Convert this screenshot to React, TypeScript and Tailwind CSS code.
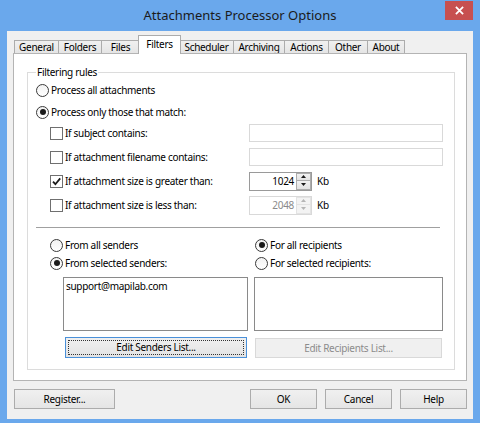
import React from 'react';

type RadioProps = { checked?: boolean; label: string };

const Radio: React.FC<RadioProps> = ({ checked, label }) => (
  <div className="flex items-center gap-[2px]">
    <span className="flex h-[13px] w-[13px] shrink-0 items-center justify-center rounded-full border border-[#3a3a3a] bg-gradient-to-b from-[#f2f2f2] to-white">
      {checked && <span className="h-[6px] w-[6px] rounded-full bg-[#1a1a1a]" />}
    </span>
    <span className="whitespace-nowrap">{label}</span>
  </div>
);

const Checkbox: React.FC<RadioProps> = ({ checked, label }) => (
  <div className="flex items-center gap-[2px]">
    <span className="flex h-[13px] w-[13px] shrink-0 items-center justify-center border border-[#6f6f6f] bg-white">
      {checked && (
        <svg viewBox="0 0 11 11" className="h-[11px] w-[11px]">
          <path d="M2 5.6 L4.4 8.2 L9.2 2.4" stroke="#1a1a1a" strokeWidth="1.8" fill="none" />
        </svg>
      )}
    </span>
    <span className="whitespace-nowrap">{label}</span>
  </div>
);

const Spinner: React.FC<{ value: string; disabled?: boolean }> = ({ value, disabled }) => (
  <div
    className={
      disabled
        ? 'flex h-[19px] w-[63px] border border-[#d9d9d9] bg-white text-[#8a8a8a]'
        : 'flex h-[19px] w-[63px] border border-[#9a9a9a] bg-white text-black'
    }
  >
    <span className="flex-1 pr-[2px] text-right leading-[17px]">{value}</span>
    <div className="flex w-[15px] flex-col">
      {/* up / down arrows */}
      <span
        className={
          disabled
            ? 'flex h-[8px] items-center justify-center border border-[#e3e3e3] bg-[#f3f3f3]'
            : 'flex h-[8px] items-center justify-center border border-[#acacac] bg-gradient-to-b from-[#f2f2f2] to-[#e2e2e2]'
        }
      >
        <svg viewBox="0 0 5 3" className="h-[3px] w-[5px]">
          <path d="M0 3 L2.5 0 L5 3 Z" fill={disabled ? '#b5b5b5' : '#1a1a1a'} />
        </svg>
      </span>
      <span
        className={
          disabled
            ? 'flex h-[9px] items-center justify-center border border-t-0 border-[#e3e3e3] bg-[#f3f3f3]'
            : 'flex h-[9px] items-center justify-center border border-t-0 border-[#acacac] bg-gradient-to-b from-[#f2f2f2] to-[#e2e2e2]'
        }
      >
        <svg viewBox="0 0 5 3" className="h-[3px] w-[5px]">
          <path d="M0 0 L2.5 3 L5 0 Z" fill={disabled ? '#b5b5b5' : '#1a1a1a'} />
        </svg>
      </span>
    </div>
  </div>
);

const Button: React.FC<{ children: React.ReactNode; className?: string }> = ({ children, className }) => (
  <div
    className={
      'flex h-[20px] items-center justify-center border border-[#acacac] bg-gradient-to-b from-[#f0f0f0] to-[#e5e5e5] ' +
      (className ?? '')
    }
  >
    {children}
  </div>
);

const tabs = [
  { label: 'General', w: 'w-[45px]' },
  { label: 'Folders', w: 'w-[44px]' },
  { label: 'Files', w: 'w-[39px]' },
  { label: 'Filters', w: 'w-[43px]', active: true },
  { label: 'Scheduler', w: 'w-[55px]' },
  { label: 'Archiving', w: 'w-[52px]' },
  { label: 'Actions', w: 'w-[45px]' },
  { label: 'Other', w: 'w-[40px]' },
  { label: 'About', w: 'w-[38px]' },
];

export default function App() {
  return (
    <div className="flex h-[423px] w-[480px] flex-col overflow-hidden bg-[#6aa8ec] font-['Noto_Sans',sans-serif] text-[10px] tracking-[-0.3px] text-black">
      {/* Title bar */}
      <div className="grid h-[31px] shrink-0 grid-cols-[1fr_auto_1fr]">
        <div />
        <div className="self-center text-[13px] leading-none tracking-normal text-[#1b1b1b]">
          Attachments Processor Options
        </div>
        <div className="flex justify-end pr-[7px] pt-[1px]">
          <div className="flex h-[19px] w-[28px] items-center justify-center bg-[#c75050]">
            <svg viewBox="0 0 10 10" className="h-[9px] w-[9px]">
              <path d="M1 1 L9 9 M9 1 L1 9" stroke="white" strokeWidth="2" />
            </svg>
          </div>
        </div>
      </div>

      {/* Client area */}
      <div className="mx-[7px] mb-[4px] flex flex-1 flex-col bg-[#f0f0f0] px-[6px] pt-[4px]">
        {/* Tabs */}
        <div className="flex h-[18px] items-end pl-[2px]">
          {tabs.map((t) =>
            t.active ? (
              <div
                key={t.label}
                className={`relative z-10 -mb-px -ml-[2px] -mr-[1px] flex h-[19px] items-start justify-center border border-b-0 border-[#acacac] bg-white pt-[3px] leading-none ${t.w}`}
              >
                {t.label}
              </div>
            ) : (
              <div
                key={t.label}
                className={`-ml-px flex h-[13px] items-center justify-center border border-b-0 border-[#acacac] bg-gradient-to-b from-[#f0f0f0] to-[#e5e5e5] leading-none ${t.w}`}
              >
                {t.label}
              </div>
            ),
          )}
        </div>

        {/* Tab page */}
        <div className="flex h-[328px] flex-col border border-[#b4b4b4] bg-white pl-[13px] pr-[11px] pt-[12px]">
          <fieldset className="h-[304px] border border-[#dcdcdc] pl-[8px] pr-[11px]">
            <legend className="px-[1px] leading-[12px]">Filtering rules</legend>

            <div className="mt-[2px] flex h-[20px] items-center">
              <Radio label="Process all attachments" />
            </div>
            <div className="mt-[3px] flex h-[18px] items-center">
              <Radio checked label="Process only those that match:" />
            </div>

            {/* Conditions */}
            <div className="flex h-[24px] items-center pl-[14px]">
              <div className="w-[199px] shrink-0">
                <Checkbox label="If subject contains:" />
              </div>
              <div className="h-[18px] flex-1 border border-[#d9d9d9] bg-white" />
            </div>
            <div className="flex h-[24px] items-center pl-[14px]">
              <div className="w-[199px] shrink-0">
                <Checkbox label="If attachment filename contains:" />
              </div>
              <div className="h-[18px] flex-1 border border-[#d9d9d9] bg-white" />
            </div>
            <div className="flex h-[24px] items-center pl-[14px]">
              <div className="w-[199px] shrink-0">
                <Checkbox checked label="If attachment size is greater than:" />
              </div>
              <Spinner value="1024" />
              <span className="ml-[5px]">Kb</span>
            </div>
            <div className="flex h-[24px] items-center pl-[14px]">
              <div className="w-[199px] shrink-0">
                <Checkbox label="If attachment size is less than:" />
              </div>
              <Spinner value="2048" disabled />
              <span className="ml-[5px]">Kb</span>
            </div>

            <div className="mr-[3px] mt-[10px] border-t border-[#a0a0a0]" />

            {/* Senders / recipients */}
            <div className="mt-[8px] flex">
              <div className="flex w-[218px] shrink-0 flex-col">
                <div className="flex h-[18px] items-center pl-[14px]">
                  <Radio label="From all senders" />
                </div>
                <div className="flex h-[18px] items-center pl-[14px]">
                  <Radio checked label="From selected senders:" />
                </div>
                <div className="ml-[27px] mt-[5px] h-[54px] w-[185px] border border-[#8a8a8a] bg-white pl-[2px] pt-[1px]">
                  support@mapilab.com
                </div>
                <div className="ml-[29px] mt-[6px] flex h-[21px] w-[182px] border border-[#4a90d9] bg-gradient-to-b from-[#f0f0f0] to-[#e3e3e3] p-[2px]">
                  <div className="flex flex-1 items-center justify-center border border-dotted border-[#333]">
                    Edit Senders List...
                  </div>
                </div>
              </div>
              <div className="flex flex-1 flex-col">
                <div className="flex h-[18px] items-center pl-[1px]">
                  <Radio checked label="For all recipients" />
                </div>
                <div className="flex h-[18px] items-center pl-[1px]">
                  <Radio label="For selected recipients:" />
                </div>
                <div className="mt-[5px] h-[54px] border border-[#8a8a8a] bg-white" />
                <div className="ml-[1px] mr-[1px] mt-[7px] flex h-[20px] items-center justify-center border border-[#d9d9d9] bg-[#f0f0f0] text-[#8c8c8c]">
                  Edit Recipients List...
                </div>
              </div>
            </div>
          </fieldset>
        </div>

        {/* Dialog buttons */}
        <div className="mt-[8px] flex items-center gap-[8px] pl-[1px]">
          <Button className="w-[101px]">Register...</Button>
          <div className="flex-1" />
          <Button className="w-[67px]">OK</Button>
          <Button className="w-[67px]">Cancel</Button>
          <Button className="w-[67px]">Help</Button>
        </div>
      </div>
    </div>
  );
}
